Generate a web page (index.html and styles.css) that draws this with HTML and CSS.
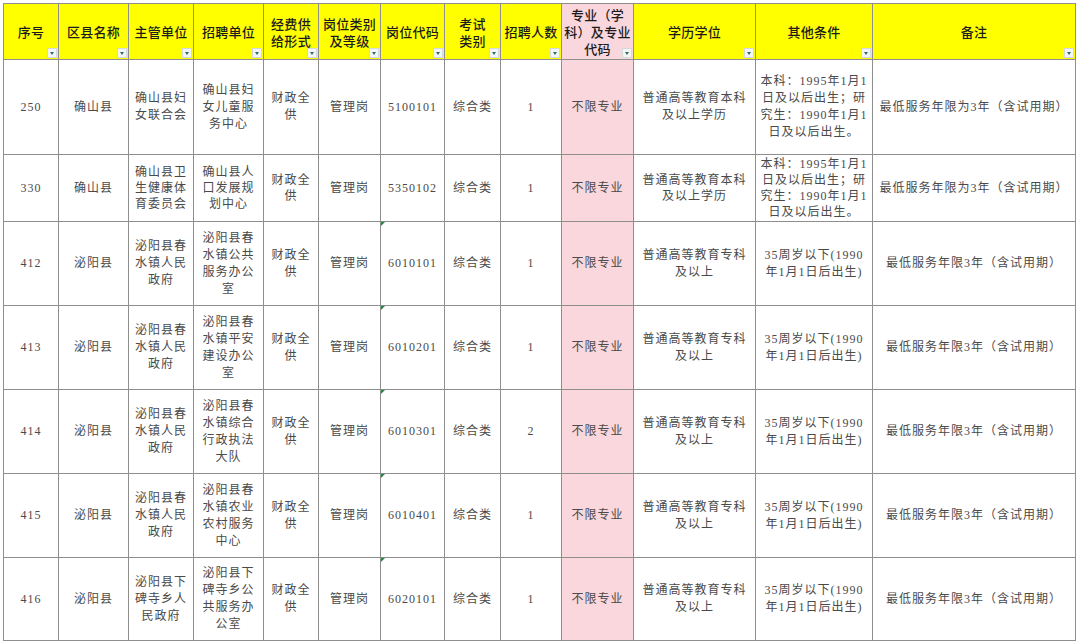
FILE: index.html
```html
<!DOCTYPE html>
<html lang="zh-CN">
<head>
<meta charset="utf-8">
<title>招聘岗位表</title>
<link rel="stylesheet" href="styles.css">
</head>
<body>
<div class="sheet">
<table class="grid">
<colgroup>
<col style="width:55px"><col style="width:70px"><col style="width:65px"><col style="width:70px">
<col style="width:55px"><col style="width:62px"><col style="width:64px"><col style="width:56px">
<col style="width:61px"><col style="width:72px"><col style="width:122px"><col style="width:117px">
<col style="width:203px">
</colgroup>
<thead>
<tr class="head">
<th>序号<i class="dd"></i></th>
<th>区县名称<i class="dd"></i></th>
<th>主管单位<i class="dd"></i></th>
<th>招聘单位<i class="dd"></i></th>
<th>经费供<br>给形式<i class="dd"></i></th>
<th>岗位类别<br>及等级<i class="dd"></i></th>
<th>岗位代码<i class="dd"></i></th>
<th>考试<br>类别<i class="dd"></i></th>
<th>招聘人数<i class="dd"></i></th>
<th class="pink">专业（学<br>科）及专业<br>代码<i class="dd"></i></th>
<th>学历学位<i class="dd"></i></th>
<th>其他条件<i class="dd"></i></th>
<th>备注<i class="dd"></i></th>
</tr>
</thead>
<tbody>
<tr class="r95">
<td>250</td><td>确山县</td><td>确山县妇<br>女联合会</td><td>确山县妇<br>女儿童服<br>务中心</td><td>财政全<br>供</td><td>管理岗</td><td>5100101</td><td>综合类</td><td>1</td><td class="pink">不限专业</td><td>普通高等教育本科<br>及以上学历</td><td>本科：1995年1月1<br>日及以后出生；研<br>究生：1990年1月1<br>日及以后出生。</td><td>最低服务年限为3年（含试用期）</td>
</tr>
<tr class="r67">
<td>330</td><td>确山县</td><td>确山县卫<br>生健康体<br>育委员会</td><td>确山县人<br>口发展规<br>划中心</td><td>财政全<br>供</td><td>管理岗</td><td>5350102</td><td>综合类</td><td>1</td><td class="pink">不限专业</td><td>普通高等教育本科<br>及以上学历</td><td>本科：1995年1月1<br>日及以后出生；研<br>究生：1990年1月1<br>日及以后出生。</td><td>最低服务年限为3年（含试用期）</td>
</tr>
<tr class="r84">
<td>412</td><td>泌阳县</td><td>泌阳县春<br>水镇人民<br>政府</td><td>泌阳县春<br>水镇公共<br>服务办公<br>室</td><td>财政全<br>供</td><td>管理岗</td><td class="flag">6010101</td><td>综合类</td><td>1</td><td class="pink">不限专业</td><td>普通高等教育专科<br>及以上</td><td>35周岁以下(1990<br>年1月1日后出生)</td><td>最低服务年限3年（含试用期）</td>
</tr>
<tr class="r84">
<td>413</td><td>泌阳县</td><td>泌阳县春<br>水镇人民<br>政府</td><td>泌阳县春<br>水镇平安<br>建设办公<br>室</td><td>财政全<br>供</td><td>管理岗</td><td class="flag">6010201</td><td>综合类</td><td>1</td><td class="pink">不限专业</td><td>普通高等教育专科<br>及以上</td><td>35周岁以下(1990<br>年1月1日后出生)</td><td>最低服务年限3年（含试用期）</td>
</tr>
<tr class="r84">
<td>414</td><td>泌阳县</td><td>泌阳县春<br>水镇人民<br>政府</td><td>泌阳县春<br>水镇综合<br>行政执法<br>大队</td><td>财政全<br>供</td><td>管理岗</td><td class="flag">6010301</td><td>综合类</td><td>2</td><td class="pink">不限专业</td><td>普通高等教育专科<br>及以上</td><td>35周岁以下(1990<br>年1月1日后出生)</td><td>最低服务年限3年（含试用期）</td>
</tr>
<tr class="r84">
<td>415</td><td>泌阳县</td><td>泌阳县春<br>水镇人民<br>政府</td><td>泌阳县春<br>水镇农业<br>农村服务<br>中心</td><td>财政全<br>供</td><td>管理岗</td><td class="flag">6010401</td><td>综合类</td><td>1</td><td class="pink">不限专业</td><td>普通高等教育专科<br>及以上</td><td>35周岁以下(1990<br>年1月1日后出生)</td><td>最低服务年限3年（含试用期）</td>
</tr>
<tr class="r83">
<td>416</td><td>泌阳县</td><td>泌阳县下<br>碑寺乡人<br>民政府</td><td>泌阳县下<br>碑寺乡公<br>共服务办<br>公室</td><td>财政全<br>供</td><td>管理岗</td><td class="flag">6020101</td><td>综合类</td><td>1</td><td class="pink">不限专业</td><td>普通高等教育专科<br>及以上</td><td>35周岁以下(1990<br>年1月1日后出生)</td><td>最低服务年限3年（含试用期）</td>
</tr>
</tbody>
</table>
</div>
</body>
</html>
```

FILE: styles.css
```css
html, body {
  margin: 0;
  padding: 0;
  background: #ffffff;
}
.sheet {
  padding: 3px 0 0 3px;
  width: 1080px;
  height: 644px;
  box-sizing: border-box;
  overflow: hidden;
}
.grid {
  border-collapse: collapse;
  table-layout: fixed;
  width: 1073px;
}
.grid th, .grid td {
  border: 1px solid #8e8e8e;
  text-align: center;
  vertical-align: middle;
  padding: 0;
  overflow: hidden;
}
.grid th {
  position: relative;
  height: 55px;
  background: #ffff00;
  color: #1c1c1c;
  font-family: "Noto Sans CJK SC", "Liberation Sans", sans-serif;
  font-weight: 500;
  font-size: 13px;
  line-height: 17px;
  letter-spacing: 0.3px;
}
.grid td {
  position: relative;
  color: #4a4a4a;
  font-family: "Liberation Serif", "Noto Sans CJK SC", serif;
  font-size: 12px;
  line-height: 17px;
  letter-spacing: 1px;
}
.grid .pink {
  background: #f9d7dc;
}
.r95 td { height: 94px; }
.r67 td { height: 66px; line-height: 16px; }
.r84 td { height: 83px; }
.r83 td { height: 82px; }
.dd {
  position: absolute;
  right: 1px;
  bottom: 1px;
  width: 10px;
  height: 10px;
  background: #f4f6f6;
  border: 1px solid #d6d9d9;
  box-sizing: border-box;
}
.dd::after {
  content: "";
  position: absolute;
  left: 2px;
  top: 3px;
  border-left: 2.5px solid transparent;
  border-right: 2.5px solid transparent;
  border-top: 3px solid #2f6d70;
}
.flag::before {
  content: "";
  position: absolute;
  left: 0;
  top: 0;
  border-top: 4px solid #1e8c3a;
  border-right: 4px solid transparent;
}
```
